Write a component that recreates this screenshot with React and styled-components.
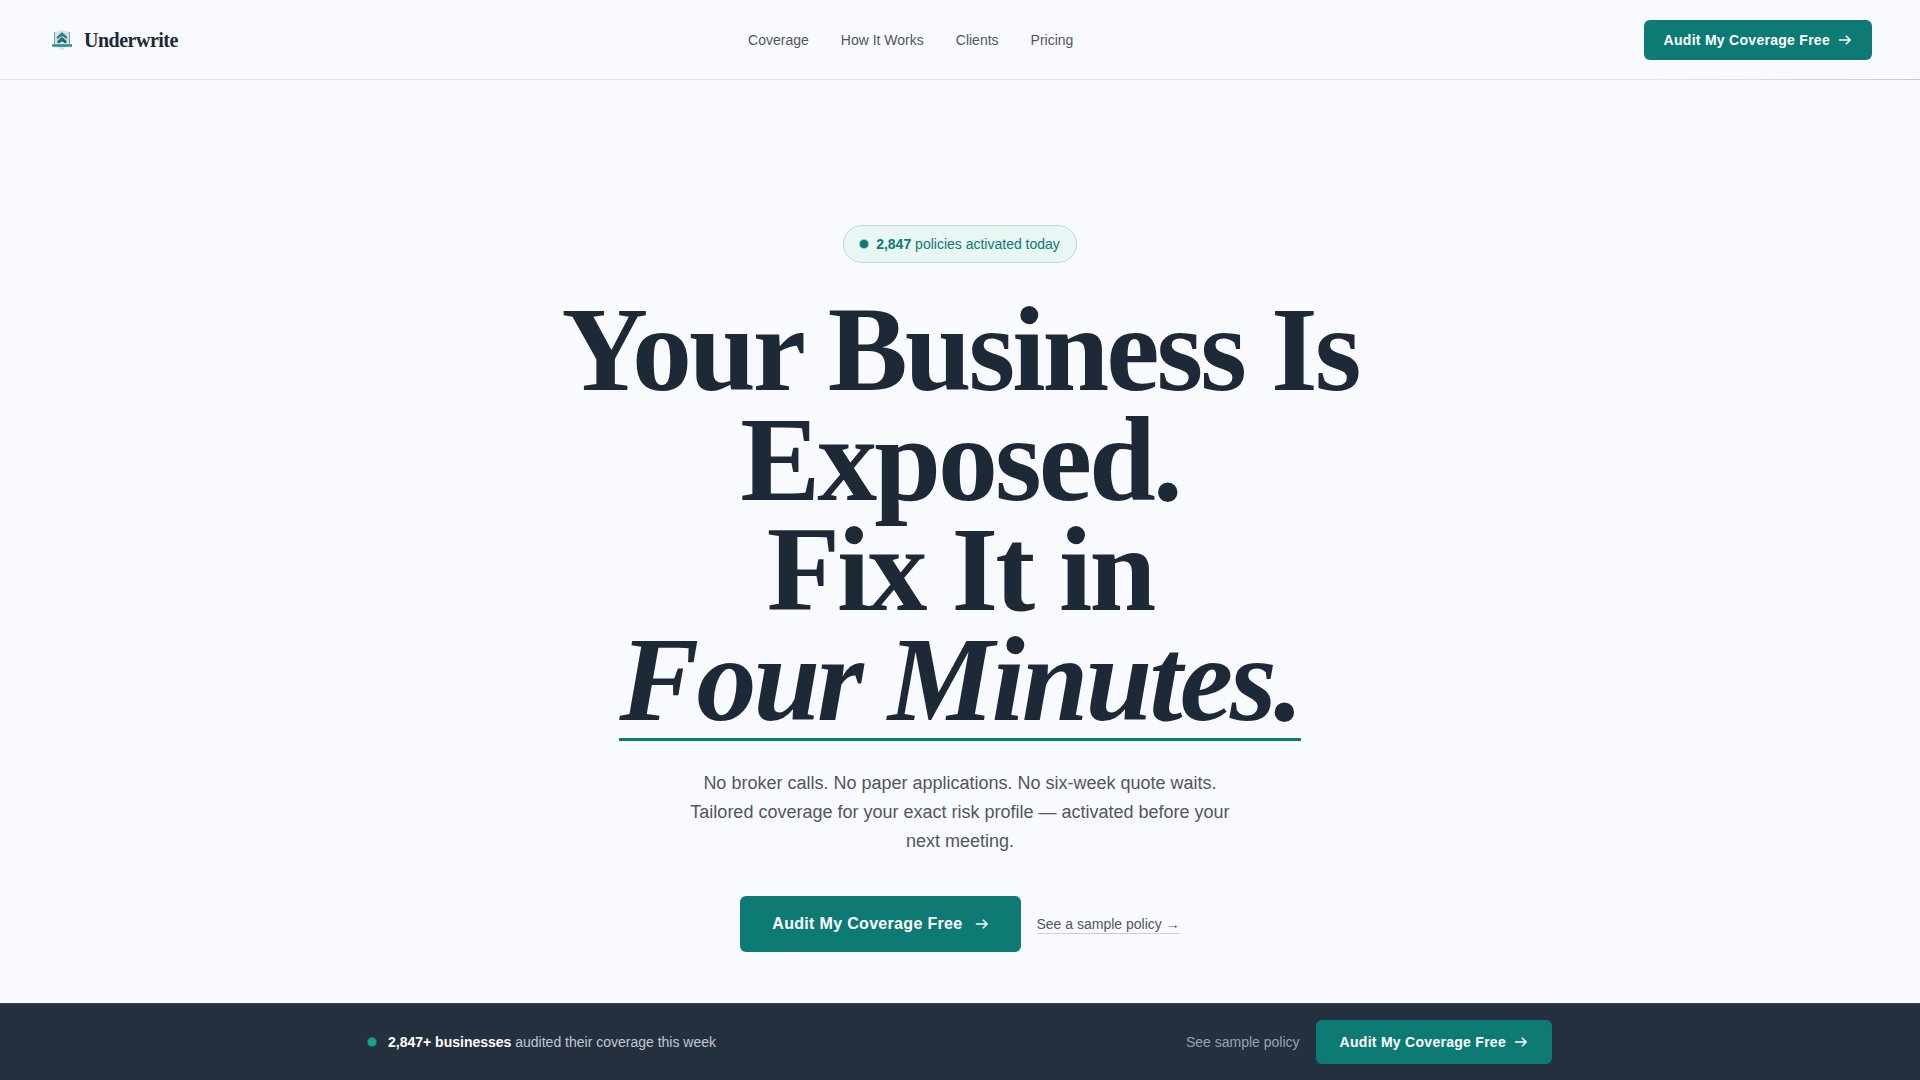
import React from 'react';
import styled, { createGlobalStyle } from 'styled-components';

const GlobalStyle = createGlobalStyle`
  * {
    box-sizing: border-box;
  }

  body {
    margin: 0;
    background: #f8fafe;
    color: #1e2937;
    font-family: "Liberation Sans", Arial, sans-serif;
    font-size: 14px;
  }
`;

const Arrow = ({ size = 14 }) => (
  <svg width={size} height={size} viewBox="0 0 14 14" fill="none" stroke="currentColor" strokeWidth="1.6" strokeLinecap="round" strokeLinejoin="round" aria-hidden="true">
    <path d="M1.5 7h10.500M8.300 3.200l3.900 3.800-3.900 3.800" />
  </svg>
);

const Logo = () => (
  <svg width="22" height="22" viewBox="0 0 22 22" fill="none" aria-hidden="true">
    <path d="M11 0.500c2 1.500 4.500 2.300 7.500 2.500v9c0 4-3 7-7.500 9-4.500-2-7.500-5-7.500-9V3c3-.2 5.500-1 7.500-2.500z" fill="#d3e2e8" />
    <path d="M3.500 3v12M18.500 3v12" stroke="#7f9aa6" strokeWidth="1" />
    <path d="M11 3.500l4.800 4.200v2L11 6.800 6.200 9.700v-2z" fill="#2b7b82" stroke="#2b7b82" strokeWidth="0.6" />
    <path d="M11 8l4.500 3.800V14h-2.700v-1.300h-3.600V14H6.500v-2.200z" fill="#1f6b74" />
    <path d="M1 15.200h20v2.600H1z" fill="#2f8f8d" />
  </svg>
);

const links = ['Coverage', 'How It Works', 'Clients', 'Pricing'];

const App = () => {
  return (
    <Page>
      <GlobalStyle />
      <Header>
        <Brand href="#">
          <Logo />
          Underwrite
        </Brand>
        <Nav>
          {links.map(link => (
            <NavLink href="#" key={link}>{link}</NavLink>
          ))}
        </Nav>
        <Button>Audit My Coverage Free <Arrow /></Button>
      </Header>

      <Hero>
        <Badge>
          <Dot />
          <span><strong>2,847</strong> policies activated today</span>
        </Badge>
        <Title>
          Your Business Is Exposed.<br />
          Fix It in <Underlined>Four Minutes.</Underlined>
        </Title>
        <Lead>
          No broker calls. No paper applications. No six-week quote waits.
          Tailored coverage for your exact risk profile — activated before your
          next meeting.
        </Lead>
        <Actions>
          <Button $size="large">Audit My Coverage Free <Arrow /></Button>
          <SampleLink href="#">See a sample policy →</SampleLink>
        </Actions>
      </Hero>

      <BottomBar>
        <BarInner>
          <BarText>
            <Dot $light />
            <span><strong>2,847+ businesses</strong> audited their coverage this week</span>
          </BarText>
          <BarActions>
            <BarLink href="#">See sample policy</BarLink>
            <Button $size="medium">Audit My Coverage Free <Arrow /></Button>
          </BarActions>
        </BarInner>
      </BottomBar>
    </Page>
  );
}

const buttonSizes = {
  small: { height: 40, padding: 20, font: 14, gap: 8 },
  medium: { height: 44, padding: 24, font: 14, gap: 8 },
  large: { height: 56, padding: 32, font: 16, gap: 12 },
};

const sizeOf = (props) => buttonSizes[props.$size || 'small'];

const Page = styled.div`
  min-height: 100vh;
  display: flex;
  flex-direction: column;
`;

const Header = styled.header`
  display: flex;
  align-items: center;
  justify-content: space-between;
  padding: 20px 48px 19px;
  border-bottom: 1px solid;
  border-image: linear-gradient(to right, #e2e6ec 86%, #bccdd3) 1;
`;

const Brand = styled.a`
  display: flex;
  align-items: center;
  gap: 11px;
  padding-left: 3px;
  color: #1e2937;
  font-family: "Liberation Serif", "Times New Roman", serif;
  font-size: 20px;
  font-weight: bold;
  letter-spacing: -0.025em;
  text-decoration: none;
`;

const Nav = styled.nav`
  display: flex;
  gap: 32px;
`;

const NavLink = styled.a`
  color: #50575f;
  text-decoration: none;
`;

const Button = styled.button`
  display: inline-flex;
  align-items: center;
  gap: ${props => sizeOf(props).gap}px;
  height: ${props => sizeOf(props).height}px;
  padding: 0 ${props => sizeOf(props).padding}px;
  border: 0;
  border-radius: 6px;
  background: #0d7a73;
  color: white;
  font-family: inherit;
  font-size: ${props => sizeOf(props).font}px;
  font-weight: bold;
  letter-spacing: 0.02em;
  white-space: nowrap;
  cursor: pointer;
`;

const Hero = styled.main`
  flex: 1;
  display: flex;
  flex-direction: column;
  align-items: center;
  padding: 145px 24px 48px;
  text-align: center;
`;

const Badge = styled.div`
  display: flex;
  align-items: center;
  gap: 8px;
  height: 38px;
  padding: 0 16px;
  border: 1px solid #b8dcd8;
  border-radius: 19px;
  background: #e8f6f4;
  color: #0d7a73;
`;

const Dot = styled.span`
  width: 8px;
  height: 8px;
  border-radius: 50%;
  background: ${props => props.$light ? '#14a392' : '#0d7a73'};
  box-shadow: 0 0 0 1px ${props => props.$light ? '#1c6c6a' : '#8fc6c0'};
`;

const Title = styled.h1`
  max-width: 900px;
  margin: 32px 0 28px;
  font-family: "Liberation Serif", "Times New Roman", serif;
  font-size: 120px;
  font-weight: bold;
  letter-spacing: -3px;
  line-height: 110px;
`;

const Underlined = styled.em`
  display: inline-block;
  padding-bottom: 3px;
  border-bottom: 3px solid #0d7a73;
`;

const Lead = styled.p`
  max-width: 560px;
  margin: 0;
  color: #50575f;
  font-size: 18px;
  line-height: 29px;
`;

const Actions = styled.div`
  display: flex;
  align-items: center;
  gap: 16px;
  margin-top: 40px;
`;

const SampleLink = styled.a`
  border-bottom: 1px solid #cbd0d7;
  color: #50575f;
  line-height: 18px;
  text-decoration: none;
`;

const BottomBar = styled.footer`
  position: sticky;
  bottom: 0;
  padding: 16px 24px;
  border-top: 1px solid #3a4451;
  background: #25303e;
  color: #c3c8ce;
`;

const BarInner = styled.div`
  display: flex;
  align-items: center;
  justify-content: space-between;
  max-width: 1184px;
  margin: 0 auto;
`;

const BarText = styled.div`
  display: flex;
  align-items: center;
  gap: 12px;

  strong {
    color: white;
  }
`;

const BarActions = styled.div`
  display: flex;
  align-items: center;
  gap: 16px;
`;

const BarLink = styled.a`
  color: #9ba3ad;
  text-decoration: none;
`;

export default App;
